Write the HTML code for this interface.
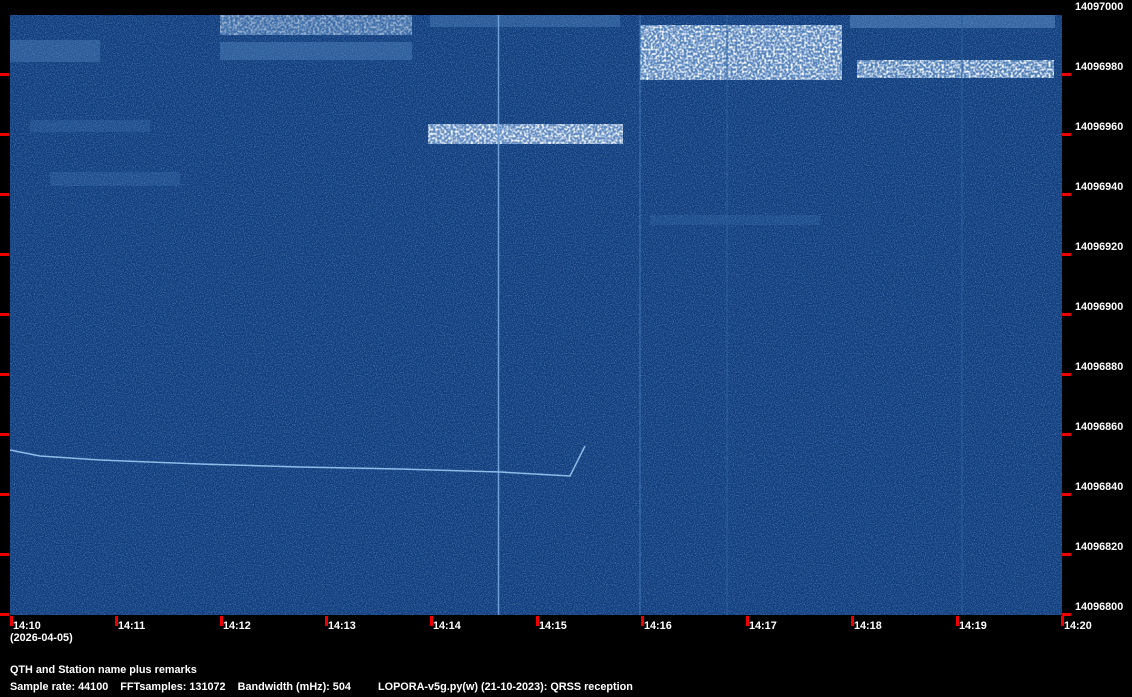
<!DOCTYPE html>
<html><head><style>
html,body{margin:0;padding:0;background:#000;width:1132px;height:697px;overflow:hidden;position:relative}
.t{position:absolute;color:#fff;font:bold 10.85px "Liberation Sans",sans-serif;white-space:pre;line-height:12px}
.r{position:absolute;background:#e00}
</style></head><body>
<svg width="1132" height="697" style="position:absolute;left:0;top:0">
<defs>
<filter id="n" x="0" y="0" width="100%" height="100%">
<feTurbulence type="fractalNoise" baseFrequency="0.9" numOctaves="2" seed="3"/>
<feColorMatrix type="matrix" values="0 0 0 0 0.4  0 0 0 0 0.6  0 0 0 0 0.95  0 0 0 1.4 -0.6"/>
</filter>
<filter id="b" x="0" y="0" width="100%" height="100%">
<feTurbulence type="fractalNoise" baseFrequency="0.45" numOctaves="1" seed="7"/>
<feColorMatrix type="matrix" values="0 0 0 0 1  0 0 0 0 1  0 0 0 0 1  0 0 0 3 -1.2"/>
</filter>
<clipPath id="c"><rect x="10" y="15" width="1052" height="600"/></clipPath>
</defs>
<rect x="10" y="15" width="1052" height="600" fill="#0f3c7c"/>
<g clip-path="url(#c)">
<rect x="10" y="15" width="1052" height="600" filter="url(#n)" opacity="0.7"/>
<rect x="10" y="40" width="90" height="22" fill="#5b8fc8" opacity="0.35"/>
<rect x="220" y="15" width="192" height="20" fill="#6d9fd5" opacity="0.45"/>
<rect x="220" y="42" width="192" height="18" fill="#5b8fc8" opacity="0.4"/>
<rect x="30" y="120" width="120" height="12" fill="#4a7fbb" opacity="0.25"/>
<rect x="50" y="172" width="130" height="14" fill="#4a7fbb" opacity="0.25"/>
<rect x="430" y="15" width="190" height="12" fill="#5b8fc8" opacity="0.35"/>
<rect x="428" y="124" width="195" height="20" fill="#8db8e8" opacity="0.6"/>
<rect x="640" y="25" width="202" height="55" fill="#7eaee2" opacity="0.6"/>
<rect x="857" y="60" width="197" height="18" fill="#7eaee2" opacity="0.55"/>
<rect x="850" y="15" width="205" height="13" fill="#6d9fd5" opacity="0.4"/>
<rect x="650" y="215" width="170" height="10" fill="#3f76b5" opacity="0.25"/>
<rect x="428" y="124" width="195" height="20" filter="url(#b)"/>
<rect x="640" y="25" width="202" height="55" filter="url(#b)"/>
<rect x="857" y="60" width="197" height="18" filter="url(#b)"/>
<rect x="220" y="15" width="192" height="20" filter="url(#b)" opacity="0.5"/>
<line x1="498.5" y1="15" x2="498.5" y2="615" stroke="#6fa0d8" stroke-width="1.5"/>
<line x1="640" y1="15" x2="640" y2="615" stroke="#3f75b4" stroke-width="1"/>
<line x1="727" y1="15" x2="727" y2="615" stroke="#2a5e9e" stroke-width="1"/>
<line x1="962" y1="15" x2="962" y2="615" stroke="#2a5e9e" stroke-width="1"/>
<polyline points="10,450 20,452 40,456 100,460 200,464 300,467 400,469 500,472 570,476 585,446" fill="none" stroke="#8fbbe8" stroke-width="1.5"/>
</g>
</svg>
<div class="r" style="left:0;top:73px;width:9px;height:3px"></div>
<div class="r" style="left:0;top:133px;width:9px;height:3px"></div>
<div class="r" style="left:0;top:193px;width:9px;height:3px"></div>
<div class="r" style="left:0;top:253px;width:9px;height:3px"></div>
<div class="r" style="left:0;top:313px;width:9px;height:3px"></div>
<div class="r" style="left:0;top:373px;width:9px;height:3px"></div>
<div class="r" style="left:0;top:433px;width:9px;height:3px"></div>
<div class="r" style="left:0;top:493px;width:9px;height:3px"></div>
<div class="r" style="left:0;top:553px;width:9px;height:3px"></div>
<div class="r" style="left:0;top:613px;width:9px;height:3px"></div>
<div class="r" style="left:1062px;top:73px;width:9px;height:3px"></div>
<div class="r" style="left:1062px;top:133px;width:9px;height:3px"></div>
<div class="r" style="left:1062px;top:193px;width:9px;height:3px"></div>
<div class="r" style="left:1062px;top:253px;width:9px;height:3px"></div>
<div class="r" style="left:1062px;top:313px;width:9px;height:3px"></div>
<div class="r" style="left:1062px;top:373px;width:9px;height:3px"></div>
<div class="r" style="left:1062px;top:433px;width:9px;height:3px"></div>
<div class="r" style="left:1062px;top:493px;width:9px;height:3px"></div>
<div class="r" style="left:1062px;top:553px;width:9px;height:3px"></div>
<div class="r" style="left:1062px;top:613px;width:9px;height:3px"></div>
<div class="r" style="left:10px;top:616px;width:3px;height:10px"></div>
<div class="r" style="left:115px;top:616px;width:3px;height:10px"></div>
<div class="r" style="left:220px;top:616px;width:3px;height:10px"></div>
<div class="r" style="left:325px;top:616px;width:3px;height:10px"></div>
<div class="r" style="left:430px;top:616px;width:3px;height:10px"></div>
<div class="r" style="left:536px;top:616px;width:3px;height:10px"></div>
<div class="r" style="left:641px;top:616px;width:3px;height:10px"></div>
<div class="r" style="left:746px;top:616px;width:3px;height:10px"></div>
<div class="r" style="left:851px;top:616px;width:3px;height:10px"></div>
<div class="r" style="left:956px;top:616px;width:3px;height:10px"></div>
<div class="r" style="left:1061px;top:616px;width:3px;height:10px"></div>
<div class="t" style="left:1075px;top:1px">14097000</div>
<div class="t" style="left:1075px;top:61px">14096980</div>
<div class="t" style="left:1075px;top:121px">14096960</div>
<div class="t" style="left:1075px;top:181px">14096940</div>
<div class="t" style="left:1075px;top:241px">14096920</div>
<div class="t" style="left:1075px;top:301px">14096900</div>
<div class="t" style="left:1075px;top:361px">14096880</div>
<div class="t" style="left:1075px;top:421px">14096860</div>
<div class="t" style="left:1075px;top:481px">14096840</div>
<div class="t" style="left:1075px;top:541px">14096820</div>
<div class="t" style="left:1075px;top:601px">14096800</div>
<div class="t" style="left:13px;top:620px">14:10</div>
<div class="t" style="left:118px;top:620px">14:11</div>
<div class="t" style="left:223px;top:620px">14:12</div>
<div class="t" style="left:328px;top:620px">14:13</div>
<div class="t" style="left:433px;top:620px">14:14</div>
<div class="t" style="left:539px;top:620px">14:15</div>
<div class="t" style="left:644px;top:620px">14:16</div>
<div class="t" style="left:749px;top:620px">14:17</div>
<div class="t" style="left:854px;top:620px">14:18</div>
<div class="t" style="left:959px;top:620px">14:19</div>
<div class="t" style="left:1064px;top:620px">14:20</div>
<div class="t" style="left:10px;top:632px">(2026-04-05)</div>
<div class="t" style="left:10px;top:664px">QTH and Station name plus remarks</div>
<div class="t" style="left:10px;top:681px">Sample rate: 44100    FFTsamples: 131072    Bandwidth (mHz): 504         LOPORA-v5g.py(w) (21-10-2023): QRSS reception</div>
</body></html>
